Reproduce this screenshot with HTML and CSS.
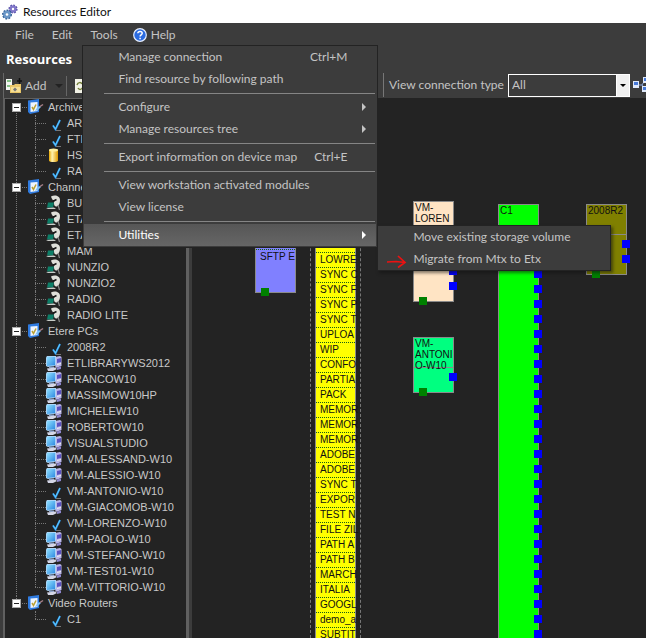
FILE: index.html
```html
<!DOCTYPE html>
<html lang="en">
<head>
<meta charset="utf-8">
<title>Resources Editor</title>
<link rel="stylesheet" href="styles.css">
</head>
<body>
<svg class="defs" aria-hidden="true">
  <linearGradient id="screen" x1="0" y1="0" x2="1" y2="1"><stop offset="0" stop-color="#8fe0ff"/><stop offset="1" stop-color="#2b86e0"/></linearGradient>
  <linearGradient id="gold" x1="0" x2="1"><stop offset="0" stop-color="#e9a800"/><stop offset=".35" stop-color="#fff3b0"/><stop offset="1" stop-color="#e09a00"/></linearGradient>
  <symbol id="group" viewBox="0 0 16 16">
    <path d="M0 1.500L11 0v13l-9 2-2-2z" fill="#2f7be0"/><path d="M2.500 3.500L9.500 3v9l-7 1z" fill="#eef5ff"/>
    <path d="M4 8l1.500 2.500 2.500-5" fill="none" stroke="#b9a032" stroke-width="1.500"/>
    <path d="M7 12l2.500-4L12 7l1 1-3 3z" fill="#7cc0f6"/><path d="M12 7.500l3-2" stroke="#a88088" stroke-width="1.500"/>
  </symbol>
  <symbol id="check" viewBox="0 0 16 16">
    <path d="M7 10.500l2.500 4L14 5" fill="none" stroke="#1f78c8" stroke-width="2"/><path d="M7 10.500l2.500 3.500L14 5" fill="none" stroke="#5cc6ff" stroke-width="1.200"/><path d="M10 15.500h5" stroke="#777"/>
  </symbol>
  <symbol id="pc" viewBox="0 0 16 16">
    <path d="M9 2l5-1 1.500 1v9l-6 2z" fill="#b9b5e8"/><path d="M11 4l4-1v4l-4 1z" fill="#5a52c0"/><path d="M11 9.500l4-1" stroke="#eee"/>
    <path d="M0 2.500L1 1h9v9.500L2 12 0 11z" fill="#a8d4f8"/><path d="M1 2h8v8l-8 1z" fill="url(#screen)"/>
    <path d="M3 11.500h5V13H3z" fill="#8aa0c8"/><path d="M1 13.500l8-1 2 1.500-4 2H2z" fill="#d4d6e6"/><path d="M11 12.500l4-1v2.500l-4 1z" fill="#8d86cf"/>
  </symbol>
  <symbol id="dish" viewBox="0 0 16 16">
    <path d="M5 1.500C9-.5 14 1 14 5c0 4-1.500 6.500-4 6.500-2-.5-2-2-2-4C7 5 5.500 3.500 5 1.500z" fill="#dfe0da"/>
    <path d="M7.500 6l3-1.500" stroke="#151515" stroke-width="1.500"/><circle cx="7.500" cy="6" r="1" fill="#151515"/>
    <path d="M12 10l1.500 5" stroke="#888" stroke-width="1.200"/><path d="M2 7.500h6l-1 5H1z" fill="#0d7f68"/><path d="M0 13l8-.5 2 1.500H2z" fill="#c8ccc8"/>
  </symbol>
  <symbol id="disk" viewBox="0 0 16 16">
    <path d="M3 3v10.500c0 2 9 2 9 0V3z" fill="url(#gold)"/><ellipse cx="7.500" cy="3" rx="4.500" ry="1.500" fill="#fff0a0"/>
  </symbol>
</svg>

<header class="titlebar">
  <svg class="app-icon" viewBox="0 0 16 16" aria-hidden="true">
    <circle cx="11" cy="5" r="3.600" fill="#8e82d4" stroke="#5750a8" stroke-width="2" stroke-dasharray="1.600 1.200"/><circle cx="11" cy="5" r="3.400" fill="#8076c8"/><circle cx="11" cy="5" r="1.200" fill="#fff"/>
    <circle cx="5" cy="10.500" r="4" fill="#6a94c4" stroke="#315f96" stroke-width="2" stroke-dasharray="1.700 1.300"/><circle cx="5" cy="10.500" r="3.700" fill="#6a96c6"/><circle cx="5" cy="10.500" r="1.300" fill="#fff"/>
  </svg>
  <span>Resources Editor</span>
</header>

<nav class="menubar">
  <button type="button">File</button>
  <button type="button">Edit</button>
  <div class="menu-anchor">
    <button type="button">Tools</button>
    <div class="menu tools-menu">
      <button type="button">Manage connection<kbd>Ctrl+M</kbd></button>
      <button type="button">Find resource by following path</button>
      <hr>
      <button type="button" class="has-sub">Configure</button>
      <button type="button" class="has-sub">Manage resources tree</button>
      <hr>
      <button type="button">Export information on device map<kbd>Ctrl+E</kbd></button>
      <hr>
      <button type="button">View workstation activated modules</button>
      <button type="button">View license</button>
      <hr>
      <button type="button" class="has-sub active">Utilities</button>
      <div class="menu submenu">
        <button type="button">Move existing storage volume</button>
        <button type="button">Migrate from Mtx to Etx
          <svg class="pointer" viewBox="0 0 20 14" aria-hidden="true"><path d="M0 7l9-.5 9 1M11 1l7 6.500-7 5" fill="none" stroke="#ee1111" stroke-width="1.700"/></svg>
        </button>
      </div>
    </div>
  </div>
  <button type="button" class="help">
    <svg viewBox="0 0 14 14" aria-hidden="true"><circle cx="7" cy="7" r="6.300" fill="#2b6be0" stroke="#e8f0ff" stroke-width="1.200"/><path d="M4.800 5.300c.2-2.600 4.500-2.400 4.400 0 0 1.500-2.100 1.500-2.100 3.100M7.100 9.700v1.500" fill="none" stroke="#fff" stroke-width="1.500"/></svg>
    Help
  </button>
</nav>

<main class="workspace">
  <aside class="sidebar">
    <h1>Resources</h1>
    <div class="toolbar">
      <button type="button" class="add">
        <svg viewBox="0 0 16 16" aria-hidden="true"><path d="M0 1h6v11H0z" fill="#f1f5f0"/><path d="M1 3h4M1 8h4" stroke="#5fae62" stroke-width="1.500"/><path d="M4 7h4l1-1h6v9H4z" fill="#e8c568"/><path d="M5 9h9v5H5z" fill="#f6df94"/><path d="M7 11.500l2-2 2 2-2 2z" fill="#777"/><path d="M11 3h5M13.500 0v6" stroke="#111" stroke-width="1.500"/></svg>
        Add<i class="caret"></i>
      </button>
      <button type="button" class="refresh" aria-label="Refresh">
        <svg viewBox="0 0 14 14" aria-hidden="true"><path d="M0 0h12v14H0z" fill="#f2f2e6"/><path d="M2 6c1-3 4-3 5-1M8 8c-1 3-4 3-5 1" fill="none" stroke="#75803a" stroke-width="1.500"/></svg>
      </button>
    </div>
    <ul class="tree">
      <li><div class="branch"><i class="box"></i><svg><use href="#group"/></svg>Archives</div>
        <ul>
          <li><svg><use href="#check"/></svg>ARCHIVE</li>
          <li><svg><use href="#check"/></svg>FTP</li>
          <li><svg><use href="#disk"/></svg>HSM</li>
          <li><svg><use href="#check"/></svg>RAID</li>
        </ul>
      </li>
      <li><div class="branch"><i class="box"></i><svg><use href="#group"/></svg>Channels</div>
        <ul>
          <li><svg><use href="#dish"/></svg>BU</li>
          <li><svg><use href="#dish"/></svg>ETA</li>
          <li><svg><use href="#dish"/></svg>ETA</li>
          <li><svg><use href="#dish"/></svg>MAM</li>
          <li><svg><use href="#dish"/></svg>NUNZIO</li>
          <li><svg><use href="#dish"/></svg>NUNZIO2</li>
          <li><svg><use href="#dish"/></svg>RADIO</li>
          <li><svg><use href="#dish"/></svg>RADIO LITE</li>
        </ul>
      </li>
      <li><div class="branch"><i class="box"></i><svg><use href="#group"/></svg>Etere PCs</div>
        <ul>
          <li><svg><use href="#check"/></svg>2008R2</li>
          <li><svg><use href="#pc"/></svg>ETLIBRARYWS2012</li>
          <li><svg><use href="#pc"/></svg>FRANCOW10</li>
          <li><svg><use href="#pc"/></svg>MASSIMOW10HP</li>
          <li><svg><use href="#pc"/></svg>MICHELEW10</li>
          <li><svg><use href="#pc"/></svg>ROBERTOW10</li>
          <li><svg><use href="#pc"/></svg>VISUALSTUDIO</li>
          <li><svg><use href="#pc"/></svg>VM-ALESSAND-W10</li>
          <li><svg><use href="#pc"/></svg>VM-ALESSIO-W10</li>
          <li><svg><use href="#check"/></svg>VM-ANTONIO-W10</li>
          <li><svg><use href="#pc"/></svg>VM-GIACOMOB-W10</li>
          <li><svg><use href="#check"/></svg>VM-LORENZO-W10</li>
          <li><svg><use href="#pc"/></svg>VM-PAOLO-W10</li>
          <li><svg><use href="#pc"/></svg>VM-STEFANO-W10</li>
          <li><svg><use href="#pc"/></svg>VM-TEST01-W10</li>
          <li><svg><use href="#pc"/></svg>VM-VITTORIO-W10</li>
        </ul>
      </li>
      <li><div class="branch"><i class="box"></i><svg><use href="#group"/></svg>Video Routers</div>
        <ul>
          <li><svg><use href="#check"/></svg>C1</li>
        </ul>
      </li>
    </ul>
  </aside>

  <section class="map">
    <div class="map-bar">
      <label for="type">View connection type</label>
      <div class="select">
        <select id="type"><option>All</option></select>
        <span class="drop"></span>
      </div>
      <svg class="net" viewBox="0 0 16 16" aria-hidden="true"><path d="M5 8h4M9 8l3-5M9 8l3 4" stroke="#8aa6dd"/><path d="M0 4h6v7H0zM10 0h6v6h-6zM9 9h7v6H9z" fill="#dfe9fb"/><path d="M1 5h4v3H1zM11 1h5v3h-5zM10 10h6v3h-6z" fill="#4779d8"/></svg>
    </div>
    <div class="canvas">
      <div class="node sftp"><p class="slot">SFTP E</p><i class="port out"></i></div>
      <div class="group-frame">
        <div class="formats">
          <p class="slot">LOWRE</p><p class="slot">SYNC C</p><p class="slot">SYNC F</p><p class="slot">SYNC P</p><p class="slot">SYNC T</p><p class="slot">UPLOA</p><p class="slot">WIP</p><p class="slot">CONFO</p><p class="slot">PARTIA</p><p class="slot">PACK</p><p class="slot">MEMOR</p><p class="slot">MEMOR</p><p class="slot">MEMOR</p><p class="slot">ADOBE</p><p class="slot">ADOBE</p><p class="slot">SYNC T</p><p class="slot">EXPOR</p><p class="slot">TEST N</p><p class="slot">FILE ZIL</p><p class="slot">PATH A</p><p class="slot">PATH B</p><p class="slot">MARCH</p><p class="slot">ITALIA</p><p class="slot">GOOGL</p><p class="slot">demo_a</p><p class="slot">SUBTIT</p>
        </div>
      </div>
      <div class="node loren"><p>VM-<br>LOREN</p><div class="rail"><i></i><i></i></div><i class="port out"></i></div>
      <div class="node antonio"><p class="ruled">VM-<br>ANTONI<br>O-W10</p><div class="rail"><i></i></div><i class="port out"></i></div>
      <div class="node router"><p>C1</p><div class="rail"><i></i><i></i><i></i><i></i><i></i><i></i><i></i><i></i><i></i><i></i><i></i><i></i><i></i><i></i><i></i><i></i><i></i><i></i><i></i><i></i><i></i><i></i><i></i><i></i><i></i></div></div>
      <div class="node server"><p class="ruled">2008R2</p><div class="rail"><i></i><i></i></div><i class="port out"></i></div>
    </div>
  </section>
</main>
</body>
</html>
```
FILE: styles.css
```css
* { box-sizing: border-box; }

body {
  margin: 0;
  height: 100vh;
  display: flex;
  flex-direction: column;
  overflow: hidden;
  background: #3c3c3c;
  color: #c4c4c4;
  font: 12px/16px Lato, "Open Sans", sans-serif;
}

button {
  margin: 0;
  padding: 0;
  border: 0;
  background: none;
  color: inherit;
  font: inherit;
  text-align: left;
}

p, ul, h1 { margin: 0; padding: 0; }
ul { list-style: none; }
.defs { position: absolute; width: 0; height: 0; }

.titlebar {
  display: flex;
  align-items: center;
  gap: 5px;
  height: 23px;
  flex: none;
  padding-left: 2px;
  background: #fff;
  color: #111;
}
.app-icon { width: 16px; height: 16px; }

.menubar {
  display: flex;
  align-items: center;
  height: 23px;
  flex: none;
  gap: 18px;
  padding-left: 15px;
}
.help { display: flex; align-items: center; gap: 4px; margin-left: -3px; }
.help svg { width: 14px; height: 14px; }

.menu-anchor { position: relative; }
.menu {
  position: absolute;
  z-index: 5;
  display: flex;
  flex-direction: column;
  padding: 0 1px;
  border: 1px solid #232323;
  background: #3c3c3c;
}
.menu button {
  position: relative;
  display: flex;
  justify-content: space-between;
  align-items: center;
  height: 22px;
  padding: 0 29px 0 34px;
  white-space: nowrap;
}
.menu kbd { font: inherit; }
.menu hr {
  margin: 3px 1px 2px 20px;
  border: 0;
  border-top: 1px solid #858585;
}
.tools-menu { top: 18px; left: -8px; width: 296px; padding-bottom: 1px; }
.has-sub::after {
  content: "";
  position: absolute;
  right: 10px;
  border: 4px solid transparent;
  border-left-color: currentColor;
  border-right: 0;
}
.menu .active { background: linear-gradient(#565656, #666); color: #fff; }
.submenu { left: 294px; bottom: -24px; width: 234px; box-shadow: 2px 2px 3px #1118; }
.pointer { position: absolute; left: 8px; top: 7px; width: 20px; height: 14px; }

.workspace { display: flex; flex: 1; min-height: 0; }

.sidebar { display: flex; flex-direction: column; flex: none; width: 192px; padding-left: 3px; }
.sidebar h1 {
  height: 27px;
  padding-left: 3px;
  color: #fff;
  font: bold 13px/27px "Open Sans", sans-serif;
}
.toolbar {
  display: flex;
  align-items: center;
  height: 25px;
  padding-left: 2px;
  border-left: 1px solid #666;
}
.add { display: flex; align-items: center; gap: 3px; padding-right: 3px; border-right: 1px solid #666; height: 20px; }
.add svg { width: 16px; height: 16px; }
.caret { margin-left: 6px; border: 4px solid transparent; border-top-color: #222; border-bottom: 0; }
.refresh { margin-left: 8px; height: 14px; }
.refresh svg { display: block; width: 14px; height: 14px; }

.tree {
  flex: 1;
  min-height: 0;
  margin-right: 3px;
  border: solid #606060;
  border-width: 1px 3px 0 2px;
  background: #232323;
  color: #c8c8c8;
  font: 11px/16px "Liberation Sans", Arial, sans-serif;
  overflow: hidden;
}
.tree svg { width: 16px; height: 16px; flex: none; }
.tree > li { position: relative; }
.tree > li:not(:last-child) {
  background: repeating-linear-gradient(#777 0 1px, transparent 1px 2px) 11px 8px / 1px 100% no-repeat;
}
.tree > li:not(:first-child)::before {
  content: "";
  position: absolute;
  left: 11px;
  height: 8px;
  border-left: 1px dotted #777;
}
.branch { position: relative; display: flex; align-items: center; gap: 4px; height: 16px; padding-left: 7px; }
.branch::before { content: ""; position: absolute; left: 17px; width: 5px; border-top: 1px dotted #777; }
.branch svg { margin-left: 3px; }
.box {
  position: relative;
  width: 9px;
  height: 9px;
  border: 1px solid #aaa;
  background: linear-gradient(#222, #222) center / 5px 1px no-repeat #fff;
}
.tree ul { padding-left: 30px; }
.tree ul li {
  position: relative;
  display: flex;
  align-items: center;
  gap: 5px;
  height: 16px;
  padding-left: 11px;
}
.tree ul li::before {
  content: "";
  position: absolute;
  left: 0;
  top: 0;
  height: 16px;
  border-left: 1px dotted #777;
}
.tree ul li:last-child::before { height: 8px; }
.tree ul li::after {
  content: "";
  position: absolute;
  left: 0;
  top: 8px;
  width: 11px;
  border-top: 1px dotted #777;
}

.map { display: flex; flex-direction: column; flex: 1; min-width: 0; overflow: hidden; }
.map-bar {
  display: flex;
  align-items: center;
  height: 24px;
  margin: 27px 0 1px 191px;
  padding-left: 5px;
  border-left: 1px solid #777;
  white-space: nowrap;
}
.select { position: relative; width: 122px; margin: 0 3px 0 auto; flex: none; }
.select select {
  display: block;
  appearance: none;
  width: 100%;
  height: 23px;
  padding: 0 3px;
  border: 1px solid #fff;
  border-radius: 0;
  background: #3c3c3c;
  color: inherit;
  font: inherit;
}
.drop { position: absolute; top: 0; right: 0; width: 14px; height: 23px; border: 1px solid #fff; background: #f0f0f0; pointer-events: none; }
.drop::after {
  content: "";
  position: absolute;
  left: 3px;
  top: 9px;
  border: 3px solid transparent;
  border-top-color: #000;
  border-bottom: 0;
}
.net { width: 16px; height: 16px; flex: none; margin-right: -3px; }

.canvas {
  position: relative;
  flex: 1;
  overflow: hidden;
  background: #232323;
  color: #111;
  font: 10px/11px "Liberation Sans", Arial, sans-serif;
}
.node { position: absolute; width: 41px; border: 1px solid #8a8a8a; }
.node p { padding-left: 1px; }
.node .ruled { height: 30px; border-bottom: 1px solid #8a8a8a; }
.node .slot, .slot {
  height: 15px;
  padding-left: 4px;
  border-top: 1px dotted #175f17;
  line-height: 13px;
  white-space: nowrap;
}
.port { position: absolute; width: 8px; height: 8px; }
.out { left: 5px; bottom: -4px; background: #008000; }
.rail { position: absolute; right: -4px; display: flex; flex-direction: column; gap: 7px; }
.rail i { width: 8px; height: 8px; background: #00f; }

.sftp { left: 63px; top: 140px; height: 55px; padding-top: 10px; background: #8080ff; }
.group-frame {
  position: absolute;
  left: 118px;
  top: 100px;
  bottom: 0;
  width: 51px;
  padding: 0 4px;
  border: dashed #777;
  border-width: 0 1px;
}
.formats { width: 41px; height: 100%; padding-top: 54px; background: #ff0; border: solid #8a8a8a; border-width: 0 1px; }
.loren { left: 221px; top: 103px; height: 101px; background: #ffe4c4; }
.loren .rail { top: 65px; }
.antonio { left: 221px; top: 239px; height: 56px; background: #00ff80; }
.antonio .rail { top: 35px; }
.router { left: 306px; top: 106px; bottom: -10px; background: #0f0; }
.router .rail { top: 65px; }
.server { left: 394px; top: 106px; height: 71px; background: #808000; }
.server .rail { top: 35px; }
```
